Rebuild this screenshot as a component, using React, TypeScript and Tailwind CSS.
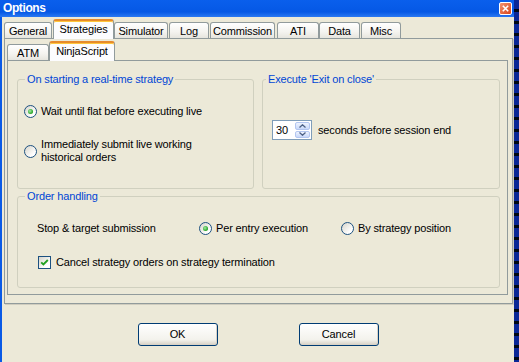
import React from 'react';

function Radio({ checked }: { checked?: boolean }) {
  return (
    <span className="flex h-[13px] w-[13px] shrink-0 items-center justify-center rounded-full border border-[#1C5180] bg-[linear-gradient(135deg,#D6D4CA,#FFFFFF_75%)]">
      {checked && (
        <span className="h-[5px] w-[5px] rounded-full bg-[radial-gradient(circle_at_40%_40%,#A6EBA6,#21A121_70%)]" />
      )}
    </span>
  );
}

function Checkbox() {
  return (
    <span className="flex h-[13px] w-[13px] shrink-0 items-center justify-center border border-[#1C5180] bg-[linear-gradient(135deg,#D6D4CA,#FFFFFF_75%)]">
      <svg width="9" height="9" viewBox="0 0 9 9">
        <path d="M1.2 4.3 L3.4 6.5 L7.8 2" fill="none" stroke="#21A121" strokeWidth="1.8" />
      </svg>
    </span>
  );
}

function Tab({ label, className }: { label: string; className: string }) {
  return (
    <div
      className={
        'flex h-[16px] shrink-0 items-center justify-center rounded-t-[3px] border border-b-0 border-[#919B9C] bg-[linear-gradient(#FFFFFF,#F4F3EF_60%,#E6E5DE)] pt-[2px] ' +
        className
      }
    >
      {label}
    </div>
  );
}

function SelTab({ label, className }: { label: string; className: string }) {
  return (
    <div
      className={
        'relative z-10 -mb-px flex h-[20px] shrink-0 items-start justify-center rounded-t-[3px] border border-b-0 border-[#919B9C] border-t-2 border-t-[#E68B2C] bg-[#FCFCFE] pt-[2px] shadow-[inset_0_1px_0_#FFC73C] ' +
        className
      }
    >
      {label}
    </div>
  );
}

function Spin() {
  return (
    <div className="flex h-[20px] w-[40px] shrink-0 border border-[#7F9DB9] bg-white">
      <span className="flex-1 pl-[3px] leading-[18px]">30</span>
      <div className="flex w-[16px] flex-col gap-px py-px pr-px">
        <div className="flex h-[8px] items-center justify-center rounded-[2px] border border-[#B3C6F0] bg-[linear-gradient(#EEF3FE,#C8D8F9)]">
          <svg width="7" height="4" viewBox="0 0 7 4">
            <path d="M0.5 3.5 L3.5 0.8 L6.5 3.5" fill="none" stroke="#4D6185" strokeWidth="1.3" />
          </svg>
        </div>
        <div className="flex h-[8px] items-center justify-center rounded-[2px] border border-[#B3C6F0] bg-[linear-gradient(#EEF3FE,#C8D8F9)]">
          <svg width="7" height="4" viewBox="0 0 7 4">
            <path d="M0.5 0.5 L3.5 3.2 L6.5 0.5" fill="none" stroke="#4D6185" strokeWidth="1.3" />
          </svg>
        </div>
      </div>
    </div>
  );
}

function Button({ label }: { label: string }) {
  return (
    <button className="flex h-[23px] w-[80px] items-center justify-center rounded-[3px] border border-[#003C74] bg-[linear-gradient(#FFFFFF,#F3F2EC_75%,#D6D0C5)] text-black shadow-[inset_-1px_-1px_0_#D8D2C6]">
      {label}
    </button>
  );
}

export default function App() {
  return (
    <div className="flex h-[362px] w-[519px] overflow-hidden font-['Liberation_Sans',Arial,sans-serif] text-[11px] leading-[13px] tracking-[-0.15px] text-black">
      <div className="flex w-[514px] flex-col">
        <div className="flex h-[17px] items-center justify-between bg-[linear-gradient(#0A5FEC,#0558E5_70%,#2A78F2)] pl-[3px] pr-[2px]">
          <span className="text-[12px] font-bold tracking-[-0.4px] text-white">Options</span>
          <span className="flex h-[13px] w-[13px] items-center justify-center rounded-[2px] border border-white bg-[linear-gradient(135deg,#F3926F,#D9451C)]">
            <svg width="7" height="7" viewBox="0 0 7 7">
              <path d="M0.8 0.8 L6.2 6.2 M6.2 0.8 L0.8 6.2" stroke="#FFFFFF" strokeWidth="1.6" />
            </svg>
          </span>
        </div>
        <div className="flex flex-1">
          <div className="w-[2px] bg-[#0A5AE6]" />
          <div className="flex w-[512px] flex-col bg-[#ECE9D8]">
            <div className="flex h-[21px] items-end pl-[2px]">
              <Tab label="General" className="w-[48px]" />
              <SelTab label="Strategies" className="ml-[1px] w-[61px]" />
              <Tab label="Simulator" className="w-[54px]" />
              <Tab label="Log" className="ml-[1px] w-[40px]" />
              <Tab label="Commission" className="ml-[1px] w-[65px]" />
              <Tab label="ATI" className="ml-[2px] w-[42px]" />
              <Tab label="Data" className="w-[41px]" />
              <Tab label="Misc" className="ml-[1px] w-[40px]" />
            </div>
            <div className="ml-[2px] flex h-[266px] w-[509px] flex-col border border-[#919B9C] border-r-[#9A9E9F] shadow-[1px_1px_0_#D0CDBF]">
              <div className="flex h-[21px] items-end pl-[2px]">
                <Tab label="ATM" className="w-[42px]" />
                <SelTab label="NinjaScript" className="w-[66px]" />
              </div>
              <div className="ml-[2px] h-[235px] w-[501px] border border-[#919B9C] pl-[9px] pt-[12px]">
                <div className="flex gap-[8px]">
                  <fieldset className="h-[116px] w-[237px] min-w-0 rounded-[3px] border border-[#D0D0BF]">
                    <legend className="ml-[7px] px-[2px] leading-[13px] text-[#0046D5]">
                      On starting a real-time strategy
                    </legend>
                    <div className="pl-[6px] pt-[19px]">
                      <div className="flex h-[13px] items-center gap-[4px]">
                        <Radio checked />
                        <span>Wait until flat before executing live</span>
                      </div>
                      <div className="mt-[20px] flex items-center gap-[4px]">
                        <Radio />
                        <div>
                          <div>Immediately submit live working</div>
                          <div>historical orders</div>
                        </div>
                      </div>
                    </div>
                  </fieldset>
                  <fieldset className="h-[116px] w-[238px] min-w-0 rounded-[3px] border border-[#D0D0BF]">
                    <legend className="ml-[3px] px-[2px] leading-[13px] text-[#0046D5]">
                      Execute 'Exit on close'
                    </legend>
                    <div className="flex items-center gap-[6px] pl-[9px] pt-[34px]">
                      <Spin />
                      <span>seconds before session end</span>
                    </div>
                  </fieldset>
                </div>
                <fieldset className="mt-[1px] h-[98px] w-[483px] min-w-0 rounded-[3px] border border-[#D0D0BF]">
                  <legend className="ml-[7px] px-[2px] leading-[13px] text-[#0046D5]">Order handling</legend>
                  <div className="pt-[19px]">
                    <div className="flex h-[13px] items-center pl-[19px]">
                      <span className="w-[162px]">Stop &amp; target submission</span>
                      <div className="flex w-[142px] items-center gap-[4px]">
                        <Radio checked />
                        <span>Per entry execution</span>
                      </div>
                      <div className="flex items-center gap-[4px]">
                        <Radio />
                        <span>By strategy position</span>
                      </div>
                    </div>
                    <div className="mt-[21px] flex h-[13px] items-center gap-[5px] pl-[20px]">
                      <Checkbox />
                      <span>Cancel strategy orders on strategy termination</span>
                    </div>
                  </div>
                </fieldset>
              </div>
            </div>
            <div className="mt-[19px] flex justify-center gap-[81px]">
              <Button label="OK" />
              <Button label="Cancel" />
            </div>
          </div>
        </div>
      </div>
      <div className="w-[5px] bg-[repeating-linear-gradient(180deg,#0A2796_0px,#0A2796_9px,#000814_9px,#000814_12px)]" />
    </div>
  );
}
